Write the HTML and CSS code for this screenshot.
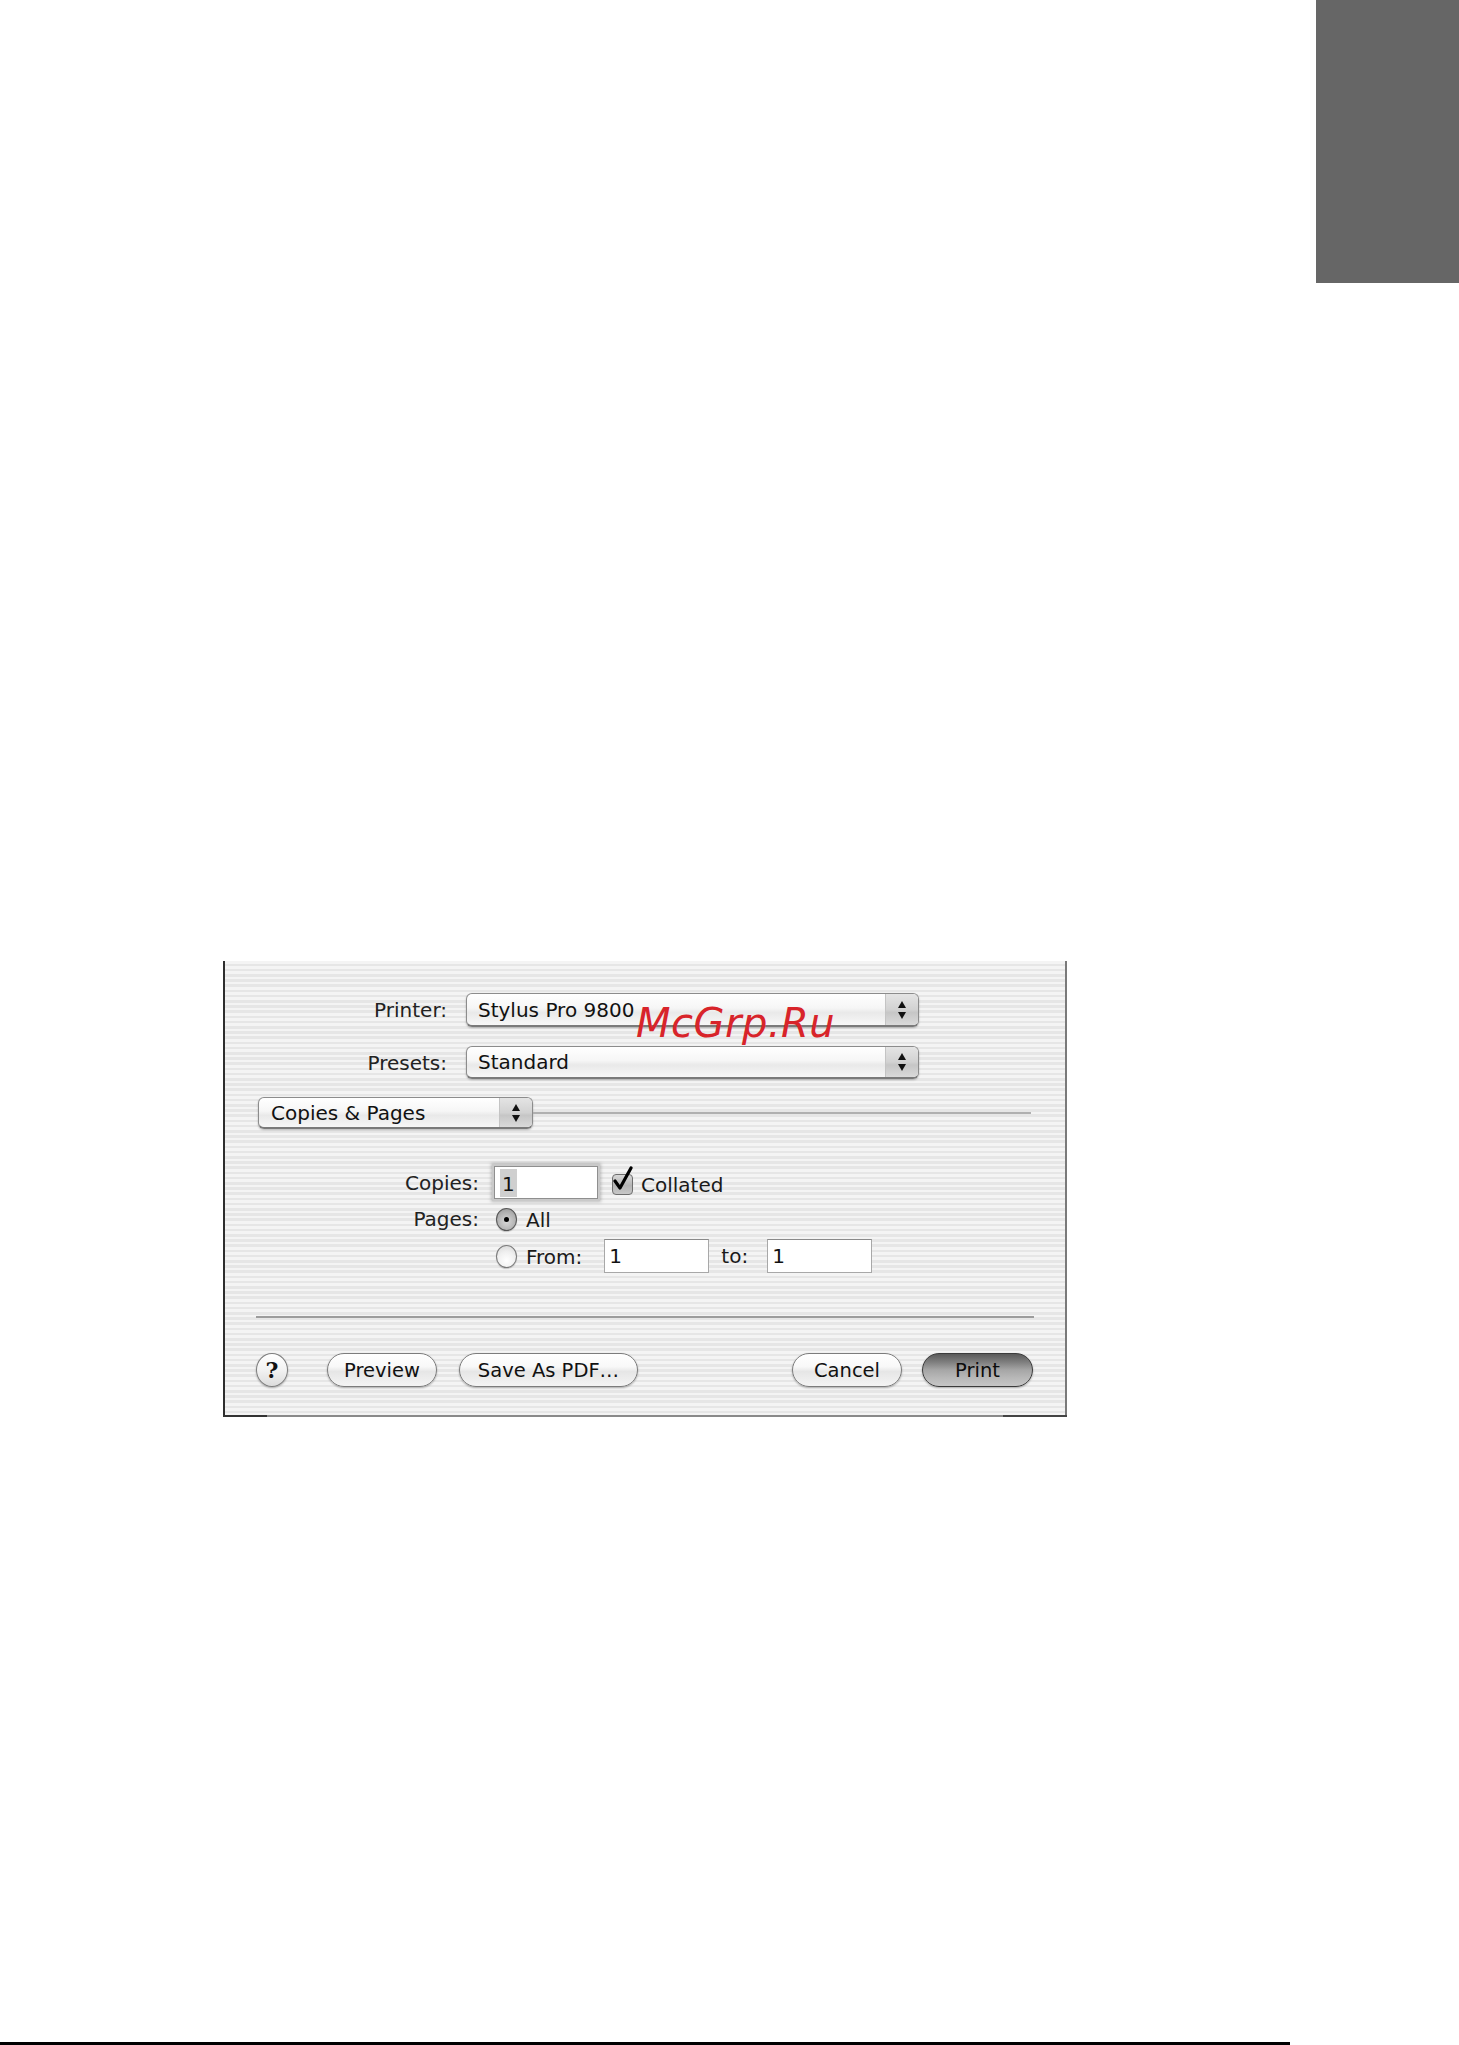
FILE: index.html
```html
<!DOCTYPE html>
<html>
<head>
<meta charset="utf-8">
<title>Print</title>
<link rel="stylesheet" href="styles.css">
</head>
<body>
<div class="page">
  <div class="tab-row"><div class="tab"></div></div>

  <div class="dialog">
    <div class="watermark">McGrp.Ru</div>

    <div class="form-top">
      <div class="row">
        <div class="label">Printer:</div>
        <div class="popup wide">
          <span class="popup-text">Stylus Pro 9800</span>
          <span class="popup-arrows"><svg width="12" height="24" viewBox="0 0 12 24"><path d="M6 3 L10 10 L2 10 Z" fill="#111"/><path d="M6 21 L10 14 L2 14 Z" fill="#111"/></svg></span>
        </div>
      </div>
      <div class="row row2">
        <div class="label">Presets:</div>
        <div class="popup wide">
          <span class="popup-text">Standard</span>
          <span class="popup-arrows"><svg width="12" height="24" viewBox="0 0 12 24"><path d="M6 3 L10 10 L2 10 Z" fill="#111"/><path d="M6 21 L10 14 L2 14 Z" fill="#111"/></svg></span>
        </div>
      </div>
    </div>

    <div class="section-row">
      <div class="popup small">
        <span class="popup-text">Copies &amp; Pages</span>
        <span class="popup-arrows"><svg width="12" height="24" viewBox="0 0 12 24"><path d="M6 3 L10 10 L2 10 Z" fill="#111"/><path d="M6 21 L10 14 L2 14 Z" fill="#111"/></svg></span>
      </div>
      <div class="section-line"></div>
    </div>

    <div class="copies-grid">
      <div class="glabel">Copies:</div>
      <div class="gcell">
        <div class="field focus"><span class="sel">1</span></div>
        <div class="checkbox"><svg width="24" height="28" viewBox="0 0 24 28"><path d="M4 15 L9 22 L20 2" fill="none" stroke="#000" stroke-width="3.2" stroke-linecap="round" stroke-linejoin="round"/></svg></div>
        <span class="ctext">Collated</span>
      </div>

      <div class="glabel">Pages:</div>
      <div class="gcell">
        <div class="radio on"><span class="dot"></span></div>
        <span class="rtext">All</span>
      </div>

      <div class="glabel"></div>
      <div class="gcell">
        <div class="radio"></div>
        <span class="rtext">From:</span>
        <div class="field range from-field">1</div>
        <span class="totext">to:</span>
        <div class="field range">1</div>
      </div>
    </div>

    <div class="bottom-line"></div>

    <div class="buttons">
      <div class="help">?</div>
      <div class="btn preview">Preview</div>
      <div class="btn save">Save As PDF…</div>
      <div class="btn cancel">Cancel</div>
      <div class="btn print">Print</div>
    </div>

    <div class="corner-left"></div>
    <div class="corner-right"></div>
  </div>

  <div class="footer-line"></div>
</div>
</body>
</html>
```
FILE: styles.css
```css
html, body {
  margin: 0;
  padding: 0;
  background: #fff;
}
body {
  font-family: "DejaVu Sans", "Liberation Sans", sans-serif;
  color: #1a1a1a;
}
.page {
  width: 1459px;
  height: 2045px;
  overflow: hidden;
}
.tab-row {
  display: flex;
  justify-content: flex-end;
  height: 283px;
}
.tab {
  width: 143px;
  height: 283px;
  background: #666666;
}

.dialog {
  position: relative;
  box-sizing: border-box;
  margin-top: 678px;
  margin-left: 223px;
  width: 844px;
  height: 456px;
  border-left: 2px solid #2e2e2e;
  border-right: 2px solid #7a7a7a;
  border-bottom: 2px solid #8a8a8a;
  background: repeating-linear-gradient(to bottom,
    #f4f4f4 0px, #f4f4f4 2.6px,
    #e6e6e6 2.6px, #e6e6e6 5.2px);
  font-size: 20px;
}
.corner-left {
  position: absolute;
  left: -2px;
  bottom: -2px;
  width: 44px;
  height: 2px;
  background: #333;
}
.corner-right {
  position: absolute;
  right: -2px;
  bottom: -2px;
  width: 64px;
  height: 2px;
  background: #444;
}

.watermark {
  position: absolute;
  left: 411px;
  top: 42px;
  font-size: 40px;
  line-height: 40px;
  font-style: italic;
  color: #d8242a;
  letter-spacing: 0.5px;
  white-space: nowrap;
}

.form-top {
  padding-top: 32px;
}
.row {
  display: flex;
  align-items: center;
  height: 34px;
}
.row2 {
  margin-top: 19px;
  height: 33px;
}
.label {
  width: 222px;
  text-align: right;
  margin-right: 19px;
  color: #222;
}

.popup {
  box-sizing: border-box;
  display: flex;
  align-items: stretch;
  border: 1px solid #8c8c8c;
  border-bottom: 2px solid #7a7a7a;
  border-radius: 6px;
  background: linear-gradient(to bottom, #ffffff 0%, #f6f6f6 45%, #e9e9e9 60%, #f7f7f7 100%);
  box-shadow: 0 1px 2px rgba(0,0,0,0.25);
  overflow: hidden;
}
.popup.wide {
  width: 453px;
  height: 100%;
}
.popup.small {
  width: 275px;
  height: 32px;
}
.popup-text {
  flex: 1;
  display: flex;
  align-items: center;
  padding-left: 11px;
  color: #111;
  white-space: nowrap;
}
.popup.small .popup-text {
  padding-left: 12px;
}
.popup-arrows {
  width: 32px;
  display: flex;
  align-items: center;
  justify-content: center;
  border-left: 1px solid #c4c4c4;
  background: linear-gradient(to bottom, #e4e4e4 0%, #d2d2d2 50%, #c6c6c6 60%, #dadada 100%);
}

.section-row {
  display: flex;
  align-items: center;
  margin-top: 18px;
  padding-left: 33px;
  padding-right: 34px;
}
.section-line {
  flex: 1;
  height: 2px;
  background: #b0b0b0;
}

.copies-grid {
  display: grid;
  grid-template-columns: 254px auto;
  grid-template-rows: 33px 26px 34px;
  column-gap: 15px;
  row-gap: 7px;
  margin-top: 37px;
}
.glabel {
  text-align: right;
  align-self: center;
  color: #222;
}
.gcell {
  display: flex;
  align-items: center;
}

.field {
  box-sizing: border-box;
  background: #fff;
  border: 1px solid #a8a8a8;
  border-top-color: #8a8a8a;
  height: 34px;
  display: flex;
  align-items: center;
  padding-left: 4px;
  color: #111;
}
.field.focus {
  width: 104px;
  height: 33px;
  padding-left: 5px;
  border: 1px solid #8f8f8f;
  box-shadow: 0 0 0 2px #c9c9c9, 0 0 3px 3px rgba(140,140,140,0.55);
}
.sel {
  background: #cfcfcf;
  padding: 2px 2px 0 2px;
  line-height: 26px;
}
.field.range {
  width: 105px;
}
.from-field {
  margin-left: 22px;
}

.checkbox {
  position: relative;
  box-sizing: border-box;
  width: 21px;
  height: 21px;
  margin-left: 14px;
  margin-top: 4px;
  border: 1px solid #6e6e6e;
  border-radius: 4px;
  background: linear-gradient(to bottom, #d8d8d8, #b4b4b4 55%, #c8c8c8);
}
.checkbox svg {
  position: absolute;
  left: -2px;
  top: -9px;
}
.ctext {
  margin-left: 8px;
  margin-top: 4px;
}

.radio {
  box-sizing: border-box;
  width: 21px;
  height: 23px;
  margin-left: 2px;
  border: 1px solid #7a7a7a;
  border-radius: 50%;
  background: radial-gradient(circle at 50% 70%, #ffffff 0%, #f0f0f0 50%, #d4d4d4 100%);
  display: flex;
  align-items: center;
  justify-content: center;
  box-shadow: 0 1px 1px rgba(0,0,0,0.2);
}
.radio.on {
  background: radial-gradient(circle at 50% 60%, #d8d8d8 0%, #b0b0b0 60%, #8e8e8e 100%);
  border-color: #555;
}
.dot {
  width: 5px;
  height: 5px;
  border-radius: 50%;
  background: #000;
}
.rtext {
  margin-left: 9px;
  margin-top: 2px;
}
.totext {
  margin-left: 12px;
  margin-right: 19px;
}

.bottom-line {
  margin-top: 43px;
  margin-left: 31px;
  width: 778px;
  height: 2px;
  background: #9c9c9c;
}

.buttons {
  display: flex;
  align-items: center;
  margin-top: 35px;
  padding-left: 31px;
  padding-right: 32px;
  height: 34px;
}
.help {
  box-sizing: border-box;
  width: 32px;
  height: 34px;
  border-radius: 50%;
  border: 1px solid #7c7c7c;
  background: linear-gradient(to bottom, #ffffff, #f2f2f2 50%, #dcdcdc);
  box-shadow: 0 1px 2px rgba(0,0,0,0.3);
  display: flex;
  align-items: center;
  justify-content: center;
  font-family: "DejaVu Serif", "Liberation Serif", serif;
  font-weight: bold;
  font-size: 22px;
  color: #111;
}
.btn {
  box-sizing: border-box;
  height: 34px;
  border-radius: 17px;
  border: 1px solid #7c7c7c;
  background: linear-gradient(to bottom, #ffffff 0%, #f8f8f8 40%, #e6e6e6 55%, #f4f4f4 100%);
  box-shadow: 0 1px 2px rgba(0,0,0,0.3);
  display: flex;
  align-items: center;
  justify-content: center;
  font-size: 19.5px;
  color: #111;
  white-space: nowrap;
}
.preview {
  width: 110px;
  margin-left: 39px;
}
.save {
  width: 179px;
  margin-left: 22px;
}
.cancel {
  width: 110px;
  margin-left: auto;
}
.print {
  width: 111px;
  margin-left: 20px;
  border-color: #3c3c3c;
  background: linear-gradient(to bottom, #5a5a5a 0%, #7e7e7e 25%, #a6a6a6 50%, #b8b8b8 75%, #c6c6c6 100%);
  color: #0c0c0c;
}

.footer-line {
  margin-top: 625px;
  width: 1290px;
  height: 3px;
  background: #000;
}
```
